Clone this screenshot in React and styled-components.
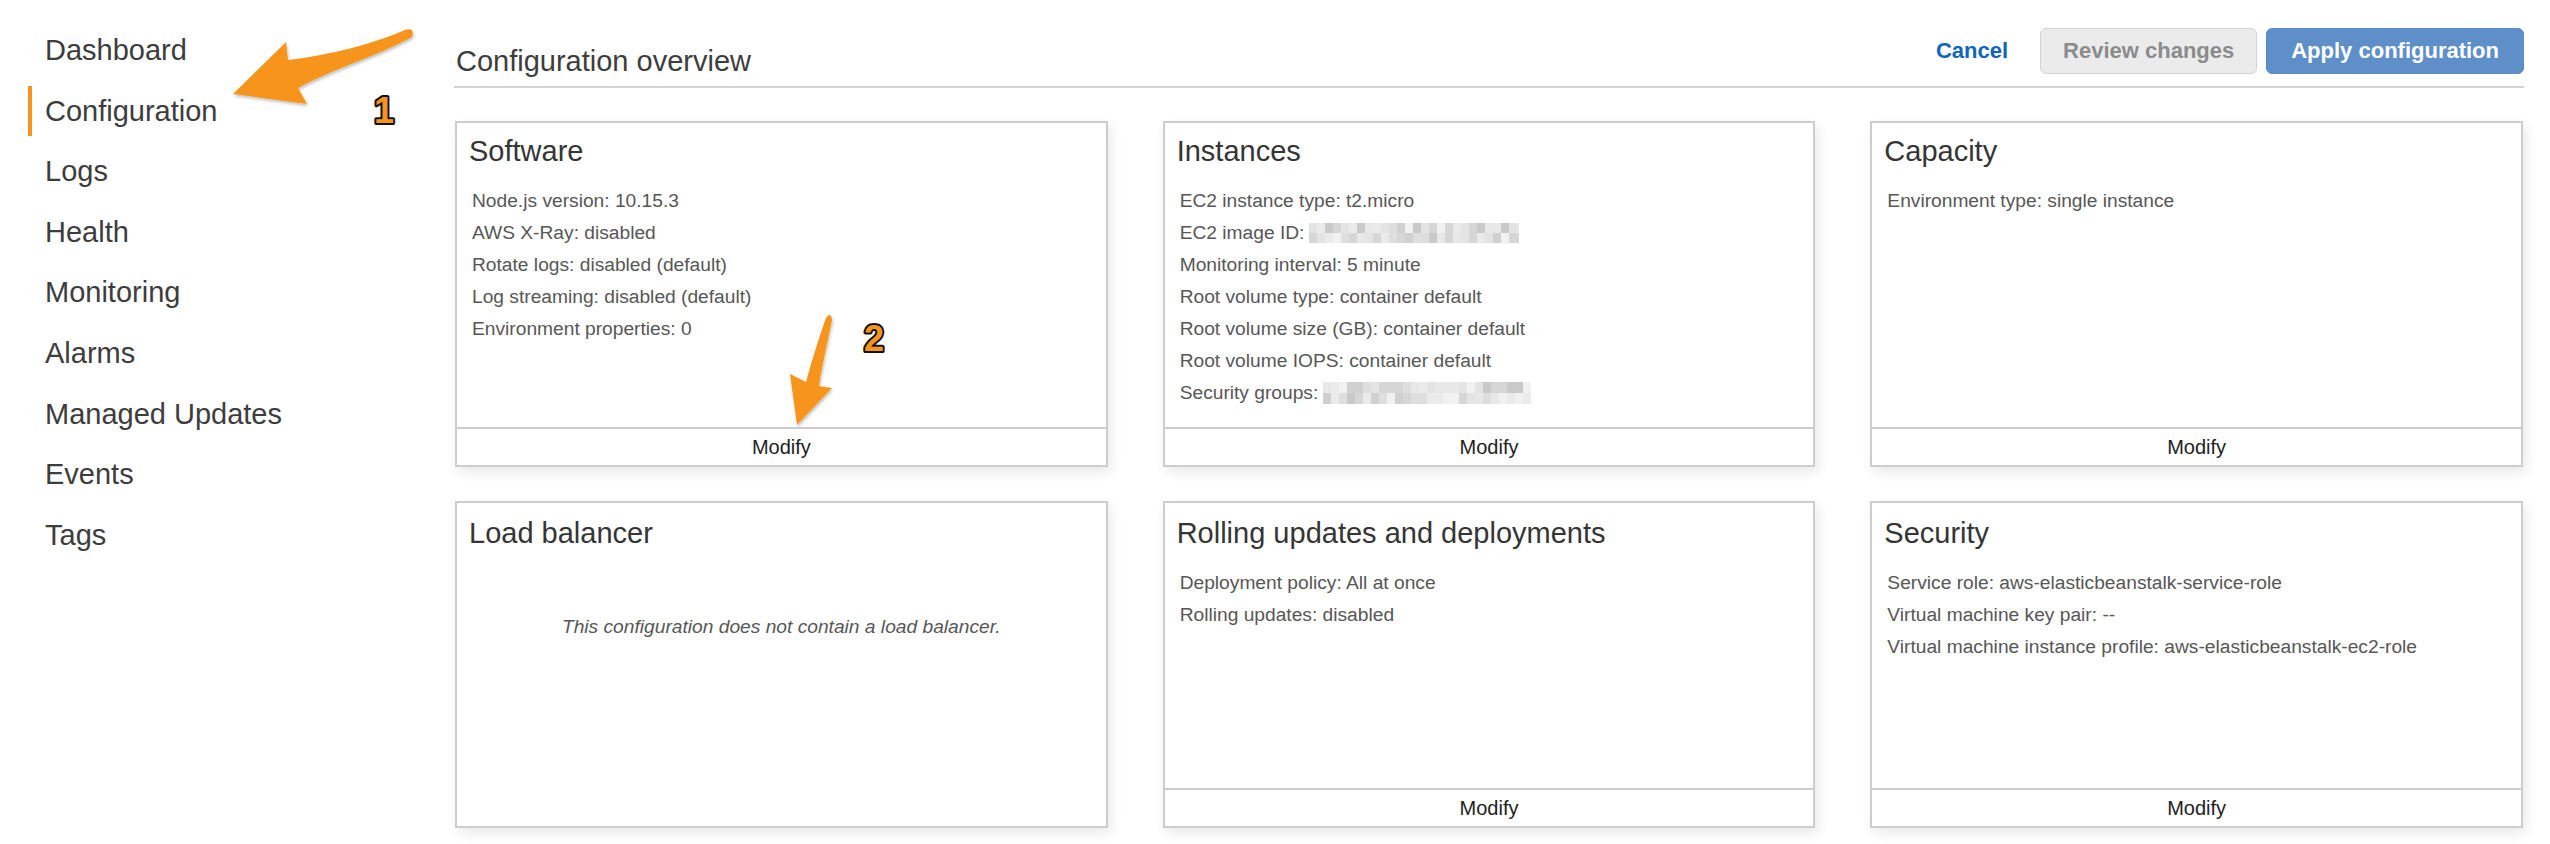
import React from "react";
import styled, { createGlobalStyle } from "styled-components";

const Colors = {
  text: "#3d3d3d",
  muted: "#575757",
  border: "#cdcdcd",
  orange: "#f7941d",
  link: "#1166bb",
  primary: "#5f8fc8",
};

const navItems = [
  "Dashboard",
  "Configuration",
  "Logs",
  "Health",
  "Monitoring",
  "Alarms",
  "Managed Updates",
  "Events",
  "Tags",
];

const cards = [
  {
    title: "Software",
    rows: [
      "Node.js version: 10.15.3",
      "AWS X-Ray: disabled",
      "Rotate logs: disabled (default)",
      "Log streaming: disabled (default)",
      "Environment properties: 0",
    ],
  },
  {
    title: "Instances",
    rows: [
      "EC2 instance type: t2.micro",
      { label: "EC2 image ID:", blur: 210, h: 20, seed: 7 },
      "Monitoring interval: 5 minute",
      "Root volume type: container default",
      "Root volume size (GB): container default",
      "Root volume IOPS: container default",
      { label: "Security groups:", blur: 208, h: 22, seed: 19 },
    ],
  },
  { title: "Capacity", rows: ["Environment type: single instance"] },
  {
    title: "Load balancer",
    empty: "This configuration does not contain a load balancer.",
  },
  {
    title: "Rolling updates and deployments",
    rows: ["Deployment policy: All at once", "Rolling updates: disabled"],
  },
  {
    title: "Security",
    rows: [
      "Service role: aws-elasticbeanstalk-service-role",
      "Virtual machine key pair: --",
      "Virtual machine instance profile: aws-elasticbeanstalk-ec2-role",
    ],
  },
];

// pixelated placeholder for the redacted values
function Mosaic({ width, height, seed }) {
  const greys = ["#c9c9c9", "#d6d6d6", "#dedede", "#e4e4e4", "#ebebeb", "#f1f1f1", "#d0d0d0", "#e8e8e8"];
  let s = seed;
  const next = () => {
    s = (s * 9301 + 49297) % 233280;
    return s / 233280;
  };
  const cols = Math.ceil(width / 8);
  const cells = [];
  for (let r = 0; r < 2; r++) {
    for (let c = 0; c < cols; c++) {
      cells.push(
        <rect
          key={r + "-" + c}
          x={c * 8}
          y={(r * height) / 2}
          width={8}
          height={height / 2}
          fill={greys[Math.floor(next() * greys.length)]}
        />
      );
    }
  }
  return (
    <BlurBox width={width} height={height} viewBox={`0 0 ${width} ${height}`}>
      {cells}
    </BlurBox>
  );
}

export default function App() {
  return (
    <>
      <GlobalStyle />
      <Page>
        <Sidebar>
          {navItems.map((item) => (
            <NavItem key={item} $active={item === "Configuration"}>
              {item}
            </NavItem>
          ))}
        </Sidebar>

        <Main>
          <Header>
            <Title>Configuration overview</Title>
            <Actions>
              <LinkButton>Cancel</LinkButton>
              <Button>Review changes</Button>
              <Button $primary>Apply configuration</Button>
            </Actions>
          </Header>

          <Grid>
            {cards.map((card) => (
              <Card key={card.title}>
                <CardBody>
                  <CardTitle>{card.title}</CardTitle>
                  {card.empty ? (
                    <EmptyNote>{card.empty}</EmptyNote>
                  ) : (
                    <List>
                      {card.rows.map((row, i) =>
                        typeof row === "string" ? (
                          <Row key={i}>{row}</Row>
                        ) : (
                          <Row key={i}>
                            {row.label}
                            <Mosaic width={row.blur} height={row.h} seed={row.seed} />
                          </Row>
                        )
                      )}
                    </List>
                  )}
                </CardBody>
                {!card.empty && <CardFooter>Modify</CardFooter>}
              </Card>
            ))}
          </Grid>
        </Main>

        <Annotations viewBox="0 0 2550 844">
          <defs>
            <filter id="arrowShadow" x="-20%" y="-20%" width="140%" height="140%">
              <feDropShadow dx="1" dy="2" stdDeviation="1.5" floodColor="#000" floodOpacity="0.25" />
            </filter>
          </defs>
          <path
            d="M 233 94 L 286 42 L 288 60 C 330 55, 370 45, 405 30 Q 415 27 412 37 C 380 55, 330 70, 298 88 L 307 104 Z"
            fill={Colors.orange}
            filter="url(#arrowShadow)"
          />
          <path
            d="M 797 425 L 790 374 L 806 382 C 812 360, 820 335, 826 318 Q 831 311 832 320 C 828 340, 822 365, 819 386 L 832 388 Z"
            fill={Colors.orange}
            filter="url(#arrowShadow)"
          />
          <Badge x="384" y="123">1</Badge>
          <Badge x="874" y="351">2</Badge>
        </Annotations>
      </Page>
    </>
  );
}

const GlobalStyle = createGlobalStyle`
  body {
    margin: 0;
    background: #fff;
    font-family: "Liberation Sans", Arial, Helvetica, sans-serif;
  }
`;

const Page = styled.div`
  position: relative;
  display: flex;
  width: 2550px;
  height: 844px;
  overflow: hidden;
`;

const Sidebar = styled.nav`
  flex: none;
  width: 453px;
  box-sizing: border-box;
  display: flex;
  flex-direction: column;
  padding: 19.7px 0 0 28px;
`;

const NavItem = styled.div`
  height: 50px;
  line-height: 50px;
  margin: 5.3px 0;
  padding-left: 13px;
  border-left: 4px solid ${(p) => (p.$active ? Colors.orange : "transparent")};
  font-size: 29px;
  color: ${Colors.text};
`;

const Main = styled.main`
  flex: 1;
  display: flex;
  flex-direction: column;
  padding: 0 26px 0 1px;
`;

const Header = styled.header`
  display: flex;
  justify-content: space-between;
  align-items: flex-start;
  height: 86px;
  border-bottom: 2px solid #d2d2d2;
`;

const Title = styled.h1`
  margin: 45px 0 0 2px;
  font-size: 29px;
  line-height: 32px;
  font-weight: 400;
  color: ${Colors.text};
`;

const Actions = styled.div`
  display: flex;
  align-items: center;
  gap: 9px;
  margin-top: 28px;
`;

const LinkButton = styled.button`
  background: none;
  border: none;
  padding: 0;
  margin-right: 23px;
  font: bold 22px "Liberation Sans", Arial, sans-serif;
  color: ${Colors.link};
`;

const Button = styled.button`
  height: 46px;
  padding: 0 ${(p) => (p.$primary ? "24px" : "22px")};
  border-radius: 6px;
  border: 1px solid ${(p) => (p.$primary ? "#5b8bc4" : "#d4d4d4")};
  background: ${(p) => (p.$primary ? Colors.primary : "#ebebeb")};
  color: ${(p) => (p.$primary ? "#fff" : "#8b8b8b")};
  font: bold 22px "Liberation Sans", Arial, sans-serif;
`;

const Grid = styled.section`
  display: grid;
  grid-template-columns: repeat(3, 1fr);
  grid-template-rows: 346px 327px;
  column-gap: 55px;
  row-gap: 34px;
  margin: 33px 1px 0 1px;
`;

const CardBody = styled.div`
  flex: 1;
  padding: 12px 12px 0 12px;
`;

const Card = styled.article`
  display: flex;
  flex-direction: column;
  box-sizing: border-box;
  background: #fff;
  border: 2px solid ${Colors.border};
  box-shadow: 3px 5px 12px rgba(0, 0, 0, 0.09);

  &:nth-child(n + 4) ${CardBody} {
    padding-top: 14px;
  }
`;

const CardTitle = styled.h2`
  margin: 0;
  font-size: 29px;
  line-height: 32px;
  font-weight: 400;
  color: #353535;
`;

const List = styled.ul`
  list-style: none;
  margin: 18px 0 0 3px;
  padding: 0;
`;

const Row = styled.li`
  display: flex;
  align-items: center;
  white-space: nowrap;
  font-size: 19.2px;
  line-height: 32px;
  color: ${Colors.muted};
`;

const BlurBox = styled.svg`
  display: block;
  margin-left: 5px;
`;

const EmptyNote = styled.p`
  margin: 62px 0 0 0;
  text-align: center;
  font-style: italic;
  font-size: 19.2px;
  line-height: 32px;
  color: ${Colors.muted};
`;

const CardFooter = styled.div`
  height: 36px;
  line-height: 36px;
  border-top: 2px solid ${Colors.border};
  text-align: center;
  font-size: 20px;
  color: #222;
`;

const Annotations = styled.svg`
  position: absolute;
  top: 0;
  left: 0;
  width: 2550px;
  height: 844px;
  pointer-events: none;
`;

const Badge = styled.text`
  font-family: "Liberation Sans", Arial, sans-serif;
  font-weight: 900;
  font-size: 36px;
  text-anchor: middle;
  fill: ${Colors.orange};
  stroke: #111;
  stroke-width: 4px;
  stroke-linejoin: round;
  paint-order: stroke;
`;
